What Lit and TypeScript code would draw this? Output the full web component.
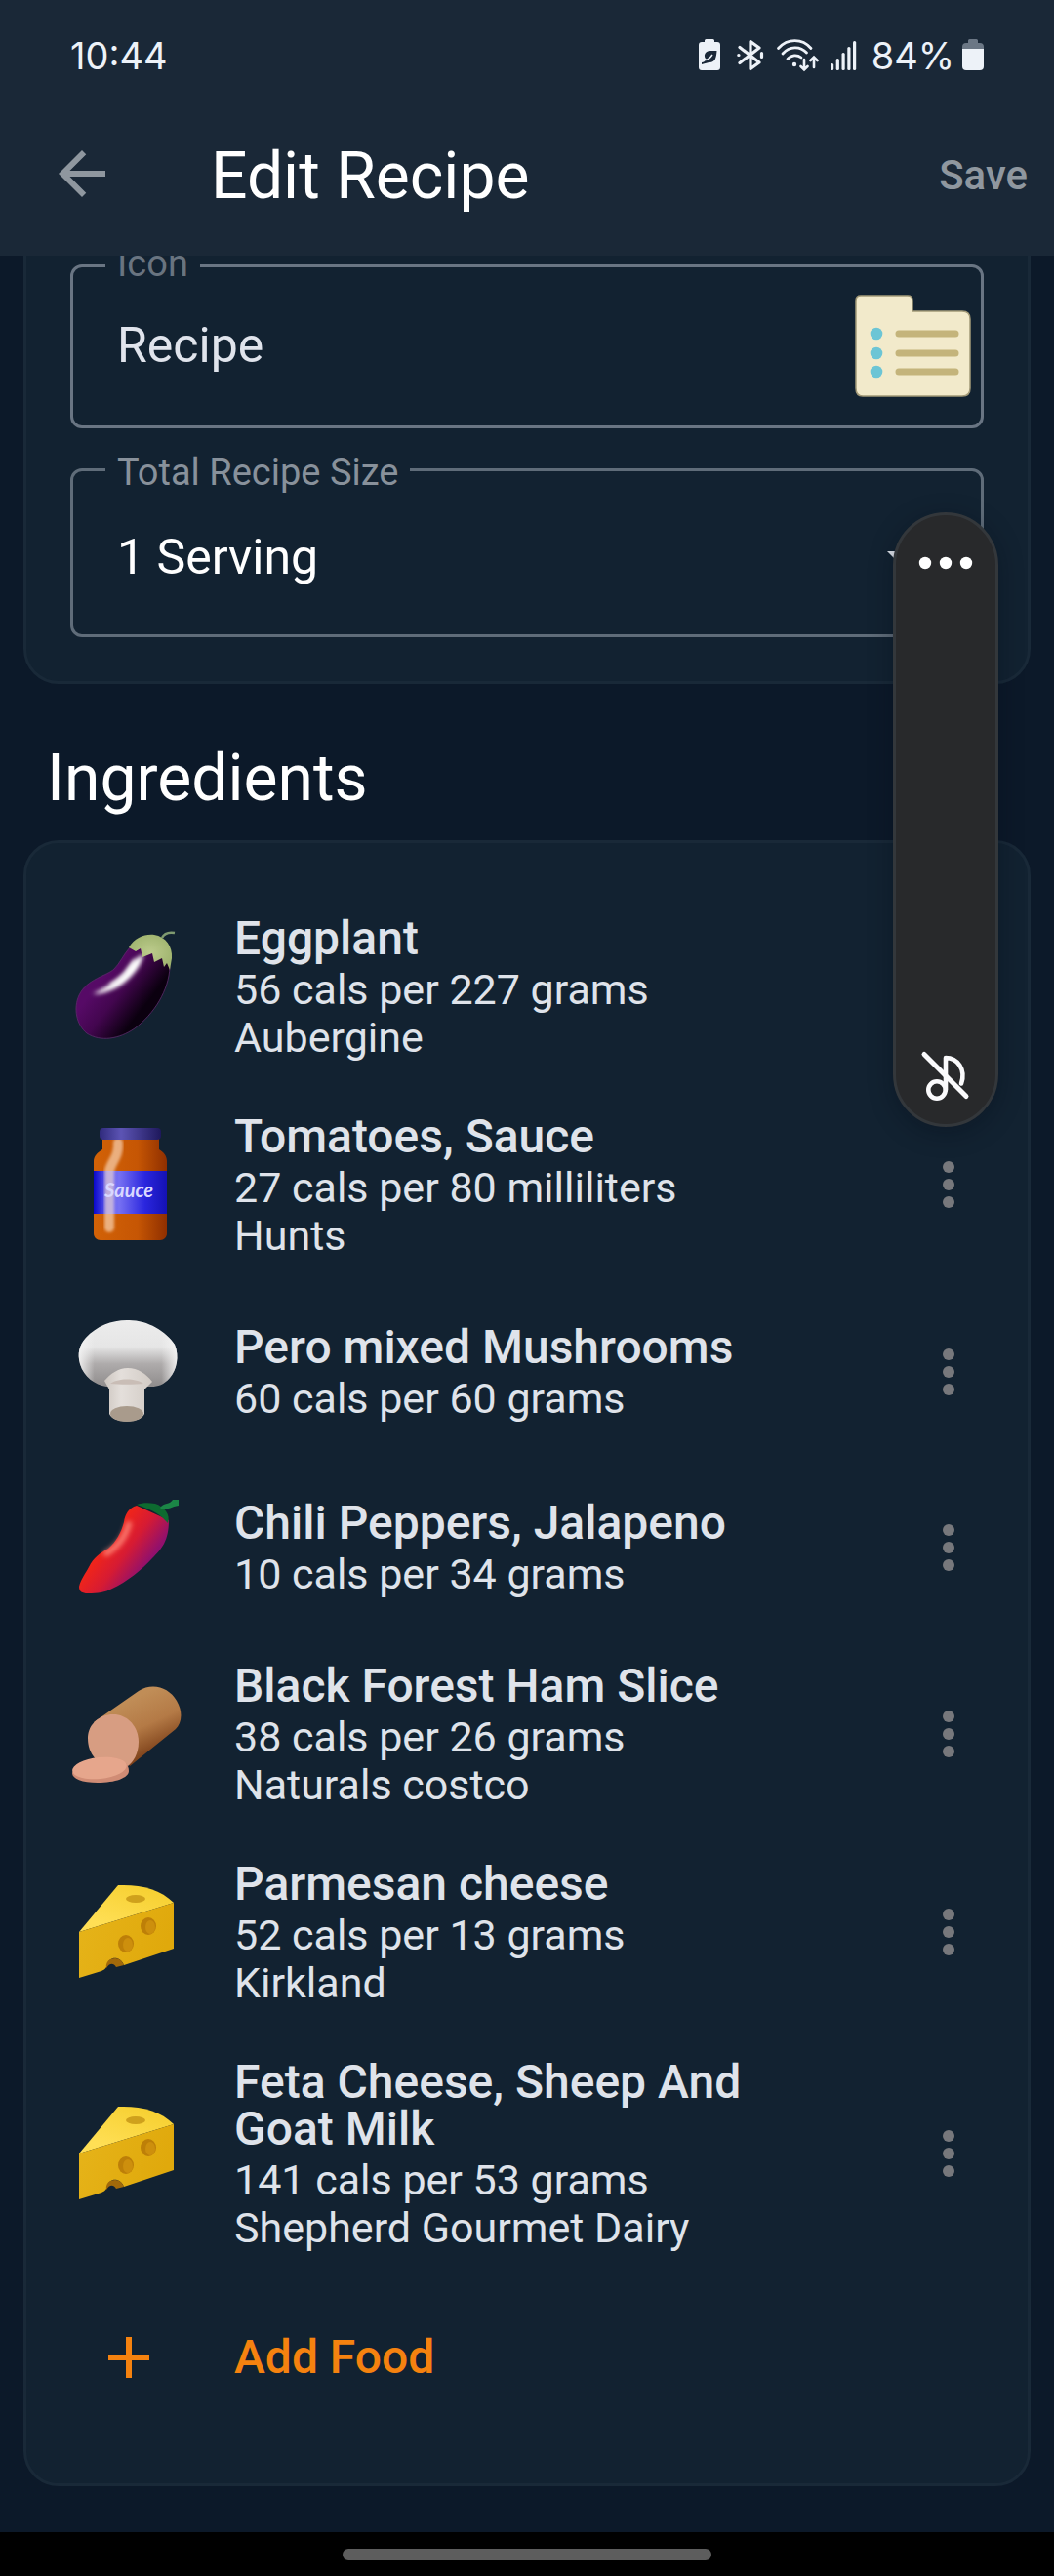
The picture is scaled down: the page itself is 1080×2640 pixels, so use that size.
import { LitElement, html, css, nothing, TemplateResult } from "lit";
import { customElement, property, state } from "lit/decorators.js";

type FoodIcon = "eggplant" | "sauce" | "mushroom" | "pepper" | "ham" | "cheese";

interface Ingredient {
  icon: FoodIcon;
  name: string;
  amount: string;
  brand?: string;
}

const INGREDIENTS: Ingredient[] = [
  { icon: "eggplant", name: "Eggplant", amount: "56 cals per 227 grams", brand: "Aubergine" },
  { icon: "sauce", name: "Tomatoes, Sauce", amount: "27 cals per 80 milliliters", brand: "Hunts" },
  { icon: "mushroom", name: "Pero mixed Mushrooms", amount: "60 cals per 60 grams" },
  { icon: "pepper", name: "Chili Peppers, Jalapeno", amount: "10 cals per 34 grams" },
  { icon: "ham", name: "Black Forest Ham Slice", amount: "38 cals per 26 grams", brand: "Naturals costco" },
  { icon: "cheese", name: "Parmesan cheese", amount: "52 cals per 13 grams", brand: "Kirkland" },
  { icon: "cheese", name: "Feta Cheese, Sheep And Goat Milk", amount: "141 cals per 53 grams", brand: "Shepherd Gourmet Dairy" },
];

const FOOD_ART: Record<FoodIcon, TemplateResult> = {
  eggplant: html`<svg viewBox="0 0 120 120" aria-hidden="true">
    <defs>
      <linearGradient id="skin" x1="0.3" y1="0.35" x2="0.72" y2="0.68">
        <stop offset="0" stop-color="#560a66" />
        <stop offset="0.45" stop-color="#43064f" />
        <stop offset="1" stop-color="#0b000f" />
      </linearGradient>
      <radialGradient id="calyx" cx="0.5" cy="0.5" r="0.6">
        <stop offset="0" stop-color="#bccb8c" />
        <stop offset="1" stop-color="#9db26c" />
      </radialGradient>
      <filter id="soft" x="-30%" y="-30%" width="160%" height="160%"><feGaussianBlur stdDeviation="2" /></filter>
    </defs>
    <path d="M61 18C54 26 51 34 45 40C38 47 17 50 9 67C3 80 6 97 17 106C31 115 50 112 66 101C86 86 101 62 102 38L92 12Z" fill="url(#skin)" stroke="#5d2a6b" stroke-width="0.8" />
    <path d="M75 25C68 28 62 33 56 43C49 51 38 58 23 66C35 66 50 60 60 50C69 41 74 33 75 25Z" fill="#fff" filter="url(#soft)" />
    <path d="M66 32C61 43 53 50 42 56" stroke="#fff" stroke-width="3" stroke-linecap="round" fill="none" filter="url(#soft)" />
    <path d="M60 18C66 8 76 4 86 5C98 7 105 17 104 29L102 41L99 34L96 38L94 29L86 33L84 24L74 28L72 19L67 22Z" fill="url(#calyx)" />
    <path d="M94 8C96 4 101 2 107 3" stroke="#7f9a70" stroke-width="2.6" fill="none" />
  </svg>`,
  sauce: html`<svg viewBox="0 0 120 120" aria-hidden="true">
    <defs>
      <linearGradient id="glass"><stop offset="0" stop-color="#d26207" /><stop offset="0.6" stop-color="#c65604" /><stop offset="1" stop-color="#8f2f00" /></linearGradient>
      <linearGradient id="lid"><stop offset="0" stop-color="#2f2a7c" /><stop offset="0.35" stop-color="#5c54b4" /><stop offset="1" stop-color="#1e185c" /></linearGradient>
      <linearGradient id="wrap"><stop offset="0" stop-color="#0a08cc" /><stop offset="0.2" stop-color="#6660f0" /><stop offset="0.35" stop-color="#7670f2" /><stop offset="0.7" stop-color="#2a26de" /><stop offset="1" stop-color="#1411b4" /></linearGradient>
      <filter id="haze" x="-60%" y="-10%" width="220%" height="120%"><feGaussianBlur stdDeviation="1.6" /></filter>
    </defs>
    <path d="M33 11H91V22C96 25 99 29 99 34V108C99 112 96 115 92 115H31C27 115 24 112 24 108V34C24 29 28 25 33 22Z" fill="url(#glass)" />
    <rect x="24" y="44" width="75" height="44" fill="url(#wrap)" />
    <path d="M49 15C50 30 42 34 40 44V102" stroke="#ffe6cf" stroke-opacity="0.6" stroke-width="10" stroke-linecap="round" fill="none" filter="url(#haze)" />
    <rect x="30" y="0" width="63" height="12" rx="4" fill="url(#lid)" />
    <text class="jar-text" x="60" y="71" text-anchor="middle">Sauce</text>
  </svg>`,
  mushroom: html`<svg viewBox="0 0 120 120" aria-hidden="true">
    <defs>
      <linearGradient id="dome" x1="0" y1="0" x2="0" y2="1">
        <stop offset="0" stop-color="#ececec" /><stop offset="0.4" stop-color="#e6e6e6" /><stop offset="0.66" stop-color="#aeabab" /><stop offset="1" stop-color="#8f8c8c" />
      </linearGradient>
      <linearGradient id="rim"><stop offset="0" stop-color="#f4f4f4" stop-opacity="0.9" /><stop offset="0.16" stop-color="#f4f4f4" stop-opacity="0" /><stop offset="0.84" stop-color="#f4f4f4" stop-opacity="0" /><stop offset="1" stop-color="#f4f4f4" stop-opacity="0.9" /></linearGradient>
      <linearGradient id="stalk"><stop offset="0" stop-color="#cdc6c0" /><stop offset="0.35" stop-color="#e4dfdb" /><stop offset="1" stop-color="#d2cbc5" /></linearGradient>
    </defs>
    <path d="M58 5C78 4 98 16 107 30C112 42 109 56 102 64C96 71 90 73 83 73H37C25 71 14 63 10 50C7 39 9 31 16 23C27 11 42 5 58 5Z" fill="url(#dome)" />
    <path d="M58 5C78 4 98 16 107 30C112 42 109 56 102 64C96 71 90 73 83 73H37C25 71 14 63 10 50C7 39 9 31 16 23C27 11 42 5 58 5Z" fill="url(#rim)" />
    <path d="M35 67C41 60 49 54 59 54C69 54 78 60 84 68L76 76V101C72 111 44 111 40 101V76Z" fill="url(#stalk)" />
    <path d="M41 70C48 64 68 64 75 70C66 71 50 71 41 70Z" fill="#c9bdb6" />
    <ellipse cx="58" cy="101" rx="17" ry="8" fill="#a99b8c" />
  </svg>`,
  pepper: html`<svg viewBox="0 0 120 120" aria-hidden="true">
    <defs>
      <linearGradient id="flesh" x1="0.36" y1="0.38" x2="0.76" y2="0.66"><stop offset="0" stop-color="#ee241c" /><stop offset="0.45" stop-color="#d61b33" /><stop offset="1" stop-color="#91106d" /></linearGradient>
      <filter id="gloss" x="-40%" y="-40%" width="180%" height="180%"><feGaussianBlur stdDeviation="2.4" /></filter>
    </defs>
    <path d="M68 15C60 17 56 24 55 32C52 43 47 52 39 59C30 64 24 68 19 78C16 84 11 90 9 98C9 103 12 105 18 105C28 105 36 104 43 100C58 93 73 81 84 69C94 59 101 51 101 30Z" fill="url(#flesh)" />
    <path d="M60 34C56 47 50 56 37 64" stroke="#ff8d80" stroke-width="6" stroke-linecap="round" stroke-opacity="0.8" fill="none" filter="url(#gloss)" />
    <path d="M68 14C74 12 80 12 87 13C96 16 103 24 100 33C93 25 86 20 68 14Z" fill="#0d6b30" />
    <path d="M92 17C96 12 102 14 105 9L111 9L111 15C104 16 101 19 94 19Z" fill="#1b8546" />
  </svg>`,
  ham: html`<svg viewBox="0 0 120 120" aria-hidden="true">
    <defs>
      <linearGradient id="crust" x1="0.35" y1="0.2" x2="0.68" y2="0.85"><stop offset="0" stop-color="#c08d57" /><stop offset="0.5" stop-color="#b47a46" /><stop offset="1" stop-color="#7c4019" /></linearGradient>
    </defs>
    <path d="M24 46L70 14C84 5 101 10 109 24C116 36 114 47 108 53L61 91Z" fill="url(#crust)" />
    <path d="M44 38C60 38 70 52 70 66C70 79 64 87 59 91L26 84C20 77 18 70 18 62C18 49 29 38 44 38Z" fill="#d79d82" />
    <path d="M2 98C6 88 20 82 40 82C54 83 60 88 60 96C60 103 46 108 28 108C12 108 2 104 2 98Z" fill="#d08c75" />
    <ellipse cx="30" cy="93" rx="28" ry="11" transform="rotate(-6 30 93)" fill="#e6a68c" />
  </svg>`,
  cheese: html`<svg viewBox="0 0 120 120" aria-hidden="true">
    <defs>
      <linearGradient id="rind" x1="0.2" y1="0.8" x2="0.7" y2="0.1"><stop offset="0" stop-color="#ffdf55" /><stop offset="1" stop-color="#f7d134" /></linearGradient>
      <linearGradient id="face" x1="0" y1="0" x2="1" y2="0.3"><stop offset="0" stop-color="#e6b41a" /><stop offset="1" stop-color="#e0a90c" /></linearGradient>
    </defs>
    <path d="M49 10C72 9 92 14 106 28L9 58Z" fill="url(#rind)" />
    <path d="M9 58L106 28V75L55 92C51 82 40 83 38 91C37 95 36 96 32 98L9 105Z" fill="url(#face)" />
    <path d="M37 95C36 89 40 85 46 85C51 85 53 88 55 92L47 94C44 89 40 90 37 95Z" fill="#a2690a" />
    <ellipse cx="67" cy="24" rx="10" ry="4" fill="#cfa11c" />
    <ellipse cx="80" cy="52" rx="8" ry="9" fill="#bd7f08" />
    <ellipse cx="82" cy="53" rx="5" ry="7" fill="#cd8f0d" />
    <ellipse cx="57" cy="70" rx="8" ry="9" fill="#bd7f08" />
    <ellipse cx="59" cy="71" rx="5" ry="7" fill="#cd8f0d" />
  </svg>`,
};

@customElement("status-bar")
class StatusBar extends LitElement {
  static styles = css`
    :host {
      display: flex;
      align-items: center;
      justify-content: space-between;
      height: 94px;
      padding: 20px 72px 0;
      box-sizing: border-box;
      font-family: Inter, Roboto, "Liberation Sans", sans-serif;
      font-size: 38px;
      line-height: 48px;
      color: #edf2f8;
    }
    .tray { display: flex; align-items: center; gap: 12px; }
    .level { display: flex; align-items: center; gap: 8px; margin-left: 2px; }
    svg { display: block; height: 34px; }
  `;

  render() {
    return html`
      <span>10:44</span>
      <div class="tray">
        <svg width="28" viewBox="0 0 28 34" aria-hidden="true">
          <path d="M7 1.5Q7 0 8.500 0H15.500Q17 0 17 1.500V3H20Q23 3 23 6V29Q23 32 20 32H4Q1 32 1 29V6Q1 3 4 3H7Z" fill="#edf2f8" />
          <path d="M4 24C6 24 7 23 9 21C5 18 7 12 13 12H19.500C19 19 18 24 12 24C10 24 8 25 4 26Z" fill="#1a2838" />
          <path d="M8 21.500C11 21 13 19 15 16" stroke="#edf2f8" stroke-width="1.500" fill="none" />
        </svg>
        <svg width="28" viewBox="0 0 28 34" aria-hidden="true" fill="none" stroke="#edf2f8" stroke-width="3.200" stroke-linecap="round" stroke-linejoin="round">
          <path d="M3 8.500L23 24L14 30.500V2.500L23 9L3 24.500" />
          <path d="M1.800 16.500h.2M25.500 14.500v4" />
        </svg>
        <svg width="44" viewBox="0 0 44 34" aria-hidden="true" fill="none" stroke="#edf2f8" stroke-width="2.800" stroke-linecap="round">
          <path d="M2.500 9.500C12 -1 27 -1 36 9.500M7 15C14 7 25 7 31.500 14M12 20.500C16 16 22 16 26 19" />
          <circle cx="19" cy="26" r="2.200" fill="#edf2f8" stroke="none" />
          <path d="M29 21V31M25.500 28L29 31.500L32.500 28M39 29V19M35.500 22L39 18.500L42.500 22" stroke-width="2.600" />
        </svg>
        <svg width="28" viewBox="0 0 28 34" aria-hidden="true" fill="#edf2f8">
          <rect x="0" y="25" width="3.200" height="7" rx="1.500" />
          <rect x="5.700" y="20" width="3.200" height="12" rx="1.500" />
          <rect x="11.500" y="14" width="3.200" height="18" rx="1.500" />
          <rect x="17.300" y="8" width="3.200" height="24" rx="1.500" />
          <rect x="23" y="2" width="3.200" height="30" rx="1.500" />
        </svg>
        <span class="level">84%
          <svg width="22" viewBox="0 0 22 34" aria-hidden="true">
            <path d="M6 1.500Q6 0 7.500 0H14.500Q16 0 16 1.500V4H18Q22 4 22 8V10H0V8Q0 4 4 4H6Z" fill="#6b7785" />
            <path d="M0 10H22V28Q22 32 18 32H4Q0 32 0 28Z" fill="#edf2f8" />
          </svg>
        </span>
      </div>
    `;
  }
}

@customElement("ingredient-row")
class IngredientRow extends LitElement {
  @property({ attribute: false }) item!: Ingredient;

  static styles = css`
    :host {
      display: flex;
      align-items: center;
      gap: 48px;
      min-height: 180px;
      padding: 26px 21px 27px 45px;
      box-sizing: border-box;
      color: #dfe3ea;
    }
    .art { flex: none; width: 120px; height: 120px; }
    .art svg { display: block; width: 100%; height: 100%; overflow: visible; }
    .jar-text { font: italic 700 20px Lato, "Liberation Sans", sans-serif; fill: #d9d8ff; }
    .words { flex: 1; min-width: 0; }
    .name { margin: 0 0 4px; font-size: 48px; line-height: 48px; font-weight: 500; }
    .detail { margin: 0; font-size: 43px; line-height: 49px; }
    .more {
      flex: none;
      display: grid;
      place-items: center;
      width: 120px;
      height: 120px;
      margin-bottom: 4px;
      padding: 0;
      border: 0;
      border-radius: 50%;
      background: none;
      color: #77787c;
      cursor: pointer;
    }
    .more svg { display: block; width: 72px; height: 72px; }
  `;

  render() {
    const { icon, name, amount, brand } = this.item;
    return html`
      <div class="art">${FOOD_ART[icon]}</div>
      <div class="words">
        <h3 class="name">${name}</h3>
        <p class="detail">${amount}</p>
        ${brand ? html`<p class="detail">${brand}</p>` : nothing}
      </div>
      <button class="more" type="button" aria-label="More options">
        <svg viewBox="0 0 24 24" fill="currentColor" aria-hidden="true">
          <circle cx="12" cy="6" r="2" /><circle cx="12" cy="12" r="2" /><circle cx="12" cy="18" r="2" />
        </svg>
      </button>
    `;
  }
}

@customElement("app-root")
class AppRoot extends LitElement {
  @state() private recipeIcon = "Recipe";

  static styles = css`
    :host {
      position: relative;
      display: flex;
      flex-direction: column;
      min-height: 100vh;
      background: #0c1929;
      color: #fff;
      font-family: Roboto, "Liberation Sans", sans-serif;
    }
    * { box-sizing: border-box; }
    button, input, select { font: inherit; color: inherit; border: 0; background: none; padding: 0; margin: 0; }
    button { cursor: pointer; }
    svg { display: block; }

    .top { background: #1a2837; }
    .bar { display: flex; align-items: center; height: 168px; padding: 0 27px 0 48px; color: #8f979f; }
    .back { width: 72px; height: 72px; }
    .title { flex: 1; margin: 0 0 0 96px; padding-top: 6px; font-size: 66px; line-height: 78px; font-weight: 400; color: #fff; }
    .save { padding-top: 4px; font-size: 42px; line-height: 48px; font-weight: 500; }

    .page { flex: 1; overflow: hidden; padding: 0 24px 44px; }
    .card { border: 3px solid #192938; border-radius: 36px; background: #122231; }
    .settings { display: flex; flex-direction: column; gap: 21px; margin-top: -40px; padding: 27px 45px 45px; }
    .field { min-width: 0; margin: 0; padding: 0 9px 20px 33px; border: 3px solid #697583; border-radius: 12px; }
    .field.size { padding: 8px 9px 18px 33px; border-color: #5f6c79; }
    .legend { padding: 6px 12px 0; font-size: 38px; line-height: 36px; color: #88919b; }
    .legend.dim { padding: 0 12px 4px; color: #697480; }
    .control { display: flex; align-items: center; height: 124px; padding-left: 12px; font-size: 50px; color: #e0e4ec; }
    .size .control { height: 122px; color: #fff; }
    .entry { flex: 1; min-width: 0; height: 100%; outline: none; appearance: none; }
    .folder { flex: none; width: 120px; height: 120px; }
    .caret { flex: none; width: 72px; height: 72px; margin-right: 36px; pointer-events: none; color: #e0e4ec; }

    .heading { margin: 0; padding: 58px 24px 24px; font-size: 66px; line-height: 78px; font-weight: 400; }
    .list { padding: 48px 0; }
    .rows { margin: 0; padding: 0; list-style: none; }
    .add {
      display: flex;
      align-items: center;
      gap: 48px;
      width: 100%;
      height: 162px;
      padding: 0 45px;
      text-align: left;
      font-size: 48px;
      line-height: 48px;
      font-weight: 500;
      color: #f5820f;
    }
    .plus { width: 72px; height: 72px; margin: 0 24px; }

    .nav { display: grid; place-items: center; height: 45px; background: #000; }
    .handle { width: 35%; height: 12px; border-radius: 6px; background: #5d5d5d; }

    .volume {
      position: absolute;
      top: 525px;
      right: 57px;
      display: flex;
      flex-direction: column;
      align-items: center;
      justify-content: space-between;
      width: 108px;
      height: 630px;
      padding: 13px 0;
      border: 3px solid #33373b;
      border-radius: 54px;
      background: #28292b;
      box-shadow: 0 6px 24px rgba(5, 12, 24, 0.35);
    }
    .volume button, .volume svg { width: 72px; height: 72px; }
  `;

  private onIcon(e: Event) {
    this.recipeIcon = (e.target as HTMLInputElement).value;
  }

  render() {
    return html`
      <header class="top">
        <status-bar></status-bar>
        <div class="bar">
          <button class="back" type="button" aria-label="Back">
            <svg width="72" height="72" viewBox="0 0 24 24" fill="currentColor" aria-hidden="true">
              <path d="M20 11H7.830l5.590-5.590L12 4l-8 8 8 8 1.410-1.410L7.830 13H20v-2z" />
            </svg>
          </button>
          <h1 class="title">Edit Recipe</h1>
          <button class="save" type="button">Save</button>
        </div>
      </header>

      <main class="page">
        <section class="card settings">
          <fieldset class="field">
            <legend class="legend dim"><label for="icon">Icon</label></legend>
            <div class="control">
              <input class="entry" id="icon" type="text" .value=${this.recipeIcon} @input=${this.onIcon} />
              <svg class="folder" viewBox="0 0 120 120" aria-hidden="true">
                <path d="M6 9H54Q59 9 59 14V25H110Q118 25 118 33V104Q118 112 110 112H8Q1 112 1 104V14Q1 9 6 9Z" fill="#f2eacb" stroke="#a39a78" stroke-width="1.500" />
                <g fill="#6cc5d5"><circle cx="22" cy="48" r="6.300" /><circle cx="22" cy="68" r="6.300" /><circle cx="22" cy="87" r="6.300" /></g>
                <path d="M45 48H103M45 68H103M45 87H103" stroke="#c4b47b" stroke-width="7" stroke-linecap="round" />
              </svg>
            </div>
          </fieldset>
          <fieldset class="field size">
            <legend class="legend"><label for="size">Total Recipe Size</label></legend>
            <div class="control">
              <select class="entry" id="size">
                <option>1 Serving</option>
              </select>
              <svg class="caret" viewBox="0 0 24 24" fill="currentColor" aria-hidden="true"><path d="M7 10l5 5 5-5z" /></svg>
            </div>
          </fieldset>
        </section>

        <h2 class="heading">Ingredients</h2>

        <section class="card list">
          <ul class="rows">
            ${INGREDIENTS.map((item) => html`<li><ingredient-row .item=${item}></ingredient-row></li>`)}
          </ul>
          <button class="add" type="button">
            <svg class="plus" viewBox="0 0 24 24" fill="currentColor" aria-hidden="true"><path d="M19 13h-6v6h-2v-6H5v-2h6V5h2v6h6v2z" /></svg>
            Add Food
          </button>
        </section>
      </main>

      <footer class="nav"><div class="handle"></div></footer>

      <aside class="volume" aria-label="Volume">
        <button type="button" aria-label="More sound settings">
          <svg viewBox="0 0 72 72" fill="#fff" aria-hidden="true">
            <circle cx="15" cy="36" r="6.200" /><circle cx="36" cy="36" r="6.200" /><circle cx="57" cy="36" r="6.200" />
          </svg>
        </button>
        <button type="button" aria-label="Unmute media">
          <svg viewBox="0 0 72 72" fill="none" stroke="#fafafc" stroke-width="4.600" stroke-linecap="round" stroke-linejoin="round" aria-hidden="true">
            <circle cx="27" cy="50" r="8.700" />
            <path d="M36 50V17C48 17 57 29 52 43.500" />
            <path d="M14 13.500L57 56.500" stroke-width="5" />
          </svg>
        </button>
      </aside>
    `;
  }
}
